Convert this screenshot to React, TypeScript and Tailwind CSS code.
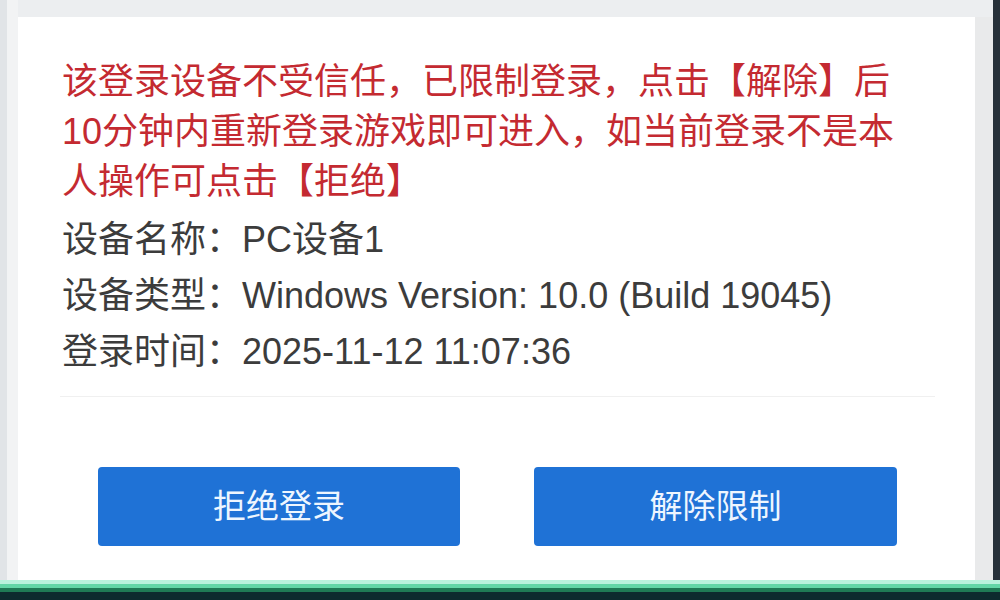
import React from "react";

const font = { fontFamily: '"Liberation Sans", "Noto Sans CJK SC", sans-serif' };

export default function App() {
  return (
    <div
      className="w-[1000px] h-[600px] flex flex-col bg-[#eceef0] overflow-hidden"
      style={font}
    >
      <div className="flex flex-1 min-h-0">
        <div className="w-[7px] bg-[#e1e4e7]" />
        <div className="w-[11px] bg-[#f2f3f4]" />
        <div className="flex-1 mt-[17px] bg-white flex flex-col pt-[40px] pl-[44px]">
          <p className="w-[850px] text-[36px] leading-[50px] text-[#c42a31]">
            该登录设备不受信任，已限制登录，点击【解除】后10分钟内重新登录游戏即可进入，如当前登录不是本人操作可点击【拒绝】
          </p>
          <div className="mt-[5px] flex flex-col text-[36px] leading-[56px] text-[#3c3c3c]">
            <div>设备名称：PC设备1</div>
            <div>设备类型：Windows Version: 10.0 (Build 19045)</div>
            <div>登录时间：2025-11-12 11:07:36</div>
          </div>
          <div className="mt-[16px] -ml-[2px] w-[875px] h-[1px] bg-[#f0f0f0]" />
          <div className="mt-[70px] ml-[36px] flex gap-[74px]">
            <button className="w-[362px] h-[79px] rounded-[4px] bg-[#1f72d6] text-[33px] text-[#eef6ff] flex items-center justify-center">
              拒绝登录
            </button>
            <button className="w-[363px] h-[79px] rounded-[4px] bg-[#1f72d6] text-[33px] text-[#eef6ff] flex items-center justify-center">
              解除限制
            </button>
          </div>
        </div>
        <div className="w-[18px] mt-[17px] bg-[#e9eaeb]" />
        <div className="w-[7px] bg-[#27313a]" />
      </div>
      <div className="h-[4px] bg-[#b9f2dc]" />
      <div className="h-[4px] bg-[#62d6a6]" />
      <div className="h-[4px] bg-[#1f7a55]" />
      <div className="h-[8px] bg-[#0d2a2e]" />
    </div>
  );
}
